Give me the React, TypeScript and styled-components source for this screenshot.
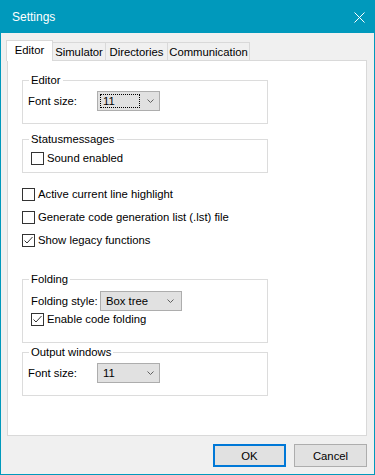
import styled, {createGlobalStyle} from "styled-components";

const GlobalStyle = createGlobalStyle`
  html, body {
    margin: 0;
    padding: 0;
  }

  body {
    font-family: "Liberation Sans", Arial, sans-serif;
    font-size: 11.3px;
    color: #000;
    background: #fff;
  }

  * {
    box-sizing: border-box;
  }
`;

const Window = styled.div`
  width: 375px;
  height: 475px;
  border: 1px solid #0099bc;
  background: #f0f0f0;
  display: flex;
  flex-direction: column;
`;

const TitleBar = styled.div`
  height: 33px;
  background: #0099bc;
  color: #fff;
  display: flex;
  align-items: center;
  justify-content: space-between;
  padding: 0 9px 0 11px;
  font-size: 12px;
`;

const CloseIcon = styled.svg`
  display: block;
  width: 11px;
  height: 11px;
`;

const Body = styled.div`
  flex: 1;
  display: flex;
  flex-direction: column;
  padding: 7px 7px 7px 5px;
`;

const TabRow = styled.div`
  display: flex;
  align-items: flex-end;
  height: 20px;
`;

const Tab = styled.div<{ $w: number; $active?: boolean }>`
  position: relative;
  z-index: ${(p) => (p.$active ? 2 : 1)};
  width: ${(p) => p.$w}px;
  height: ${(p) => (p.$active ? 21 : 18)}px;
  margin-bottom: ${(p) => (p.$active ? -1 : 0)}px;
  margin-left: -1px;
  border: 1px solid #d9d9d9;
  border-bottom: none;
  background: ${(p) => (p.$active ? "#fff" : "#f0f0f0")};
  display: flex;
  align-items: center;
  justify-content: center;
  padding-bottom: ${(p) => (p.$active ? 2 : 0)}px;

  &:first-child {
    margin-left: 0;
  }
`;

const Panel = styled.div`
  margin-left: 1px;
  width: 360px;
  height: 376px;
  border: 1px solid #d9d9d9;
  background: #fff;
  padding: 11px 0 0 14px;
  display: flex;
  flex-direction: column;
`;

const GroupBox = styled.fieldset<{ $h: number; $mt?: number }>`
  margin: ${(p) => p.$mt ?? 0}px 0 0 0;
  padding: 0;
  width: 246px;
  min-width: 0;
  height: ${(p) => p.$h}px;
  border: 1px solid #dcdcdc;
`;

const Legend = styled.legend`
  margin-left: 6px;
  padding: 0 2px;
  line-height: 16px;
`;

const FieldRow = styled.div<{ $mt?: number; $ml: number }>`
  display: flex;
  align-items: center;
  height: 20px;
  margin: ${(p) => p.$mt ?? 0}px 0 0 ${(p) => p.$ml}px;
`;

const FieldLabel = styled.span`
  width: 69px;
`;

const Combo = styled.div<{ $w: number }>`
  width: ${(p) => p.$w}px;
  height: 20px;
  border: 1px solid #adadad;
  background: #e1e1e1;
  display: flex;
  align-items: center;
  padding: 2px;
`;

const ComboValue = styled.span<{ $focused?: boolean }>`
  flex: 1;
  height: 14px;
  line-height: 12px;
  padding-left: 2px;
  border: 1px dotted ${(p) => (p.$focused ? "#000" : "transparent")};
`;

const ComboArrow = styled.span<{ $pr: number }>`
  width: 17px;
  display: flex;
  justify-content: flex-end;
  padding-right: ${(p) => p.$pr}px;
`;

const CheckRow = styled.label<{ $mt?: number; $ml?: number }>`
  display: flex;
  align-items: center;
  gap: 3px;
  height: 16px;
  margin: ${(p) => p.$mt ?? 0}px 0 0 ${(p) => p.$ml ?? 0}px;
`;

const CheckBox = styled.span`
  width: 13px;
  height: 13px;
  border: 1px solid #333;
  background: #fff;
  display: flex;
`;

const ButtonRow = styled.div`
  display: flex;
  justify-content: flex-end;
  gap: 8px;
  margin-top: 8px;
`;

const Button = styled.button<{ $default?: boolean }>`
  width: 73px;
  height: 23px;
  padding: 0;
  font-family: inherit;
  font-size: 11.3px;
  color: #000;
  background: #e1e1e1;
  border: ${(p) => (p.$default ? "2px solid #0078d7" : "1px solid #adadad")};
`;

function Chevron() {
    return (
        <svg width="7" height="4" viewBox="0 0 7 4">
            <path d="M0.5 0.5 L3.5 3.5 L6.5 0.5" fill="none" stroke="#606060" strokeWidth="1"/>
        </svg>
    );
}

function Check({checked, text, mt, ml}: { checked?: boolean; text: string; mt?: number; ml?: number }) {
    return (
        <CheckRow $mt={mt} $ml={ml}>
            <CheckBox>
                {checked && (
                    <svg width="11" height="11" viewBox="0 0 11 11">
                        <path d="M1.5 5.5 L4 8 L9.5 2" fill="none" stroke="#333" strokeWidth="1"/>
                    </svg>
                )}
            </CheckBox>
            {text}
        </CheckRow>
    );
}

function Select({value, w, focused, pr = 3}: { value: string; w: number; focused?: boolean; pr?: number }) {
    return (
        <Combo $w={w}>
            <ComboValue $focused={focused}>{value}</ComboValue>
            <ComboArrow $pr={pr}><Chevron/></ComboArrow>
        </Combo>
    );
}

export default function App() {
    return (
        <>
            <GlobalStyle/>
            <Window>
                <TitleBar>
                    <span>Settings</span>
                    <CloseIcon viewBox="0 0 11 11">
                        <path d="M0.5 0.5 L10.5 10.5 M10.5 0.5 L0.5 10.5" stroke="#fff" strokeWidth="1"/>
                    </CloseIcon>
                </TitleBar>
                <Body>
                    <TabRow>
                        <Tab $w={47} $active>Editor</Tab>
                        <Tab $w={54}>Simulator</Tab>
                        <Tab $w={63}>Directories</Tab>
                        <Tab $w={83}>Communication</Tab>
                    </TabRow>
                    <Panel>
                        <GroupBox $h={52}>
                            <Legend>Editor</Legend>
                            <FieldRow $mt={3} $ml={5}>
                                <FieldLabel>Font size:</FieldLabel>
                                <Select value="11" w={63} focused/>
                            </FieldRow>
                        </GroupBox>

                        <GroupBox $h={42} $mt={7}>
                            <Legend>Statusmessages</Legend>
                            <Check text="Sound enabled" mt={3} ml={8}/>
                        </GroupBox>

                        <Check text="Active current line highlight" mt={13}/>
                        <Check text="Generate code generation list (.lst) file" mt={7}/>
                        <Check text="Show legacy functions" mt={7} checked/>

                        <GroupBox $h={72} $mt={23}>
                            <Legend>Folding</Legend>
                            <FieldRow $mt={4} $ml={8}>
                                <FieldLabel>Folding style:</FieldLabel>
                                <Select value="Box tree" w={82} pr={5}/>
                            </FieldRow>
                            <Check text="Enable code folding" ml={8} checked/>
                        </GroupBox>

                        <GroupBox $h={52} $mt={1}>
                            <Legend>Output windows</Legend>
                            <FieldRow $mt={3} $ml={5}>
                                <FieldLabel>Font size:</FieldLabel>
                                <Select value="11" w={63}/>
                            </FieldRow>
                        </GroupBox>
                    </Panel>
                    <ButtonRow>
                        <Button $default>OK</Button>
                        <Button>Cancel</Button>
                    </ButtonRow>
                </Body>
            </Window>
        </>
    );
}
